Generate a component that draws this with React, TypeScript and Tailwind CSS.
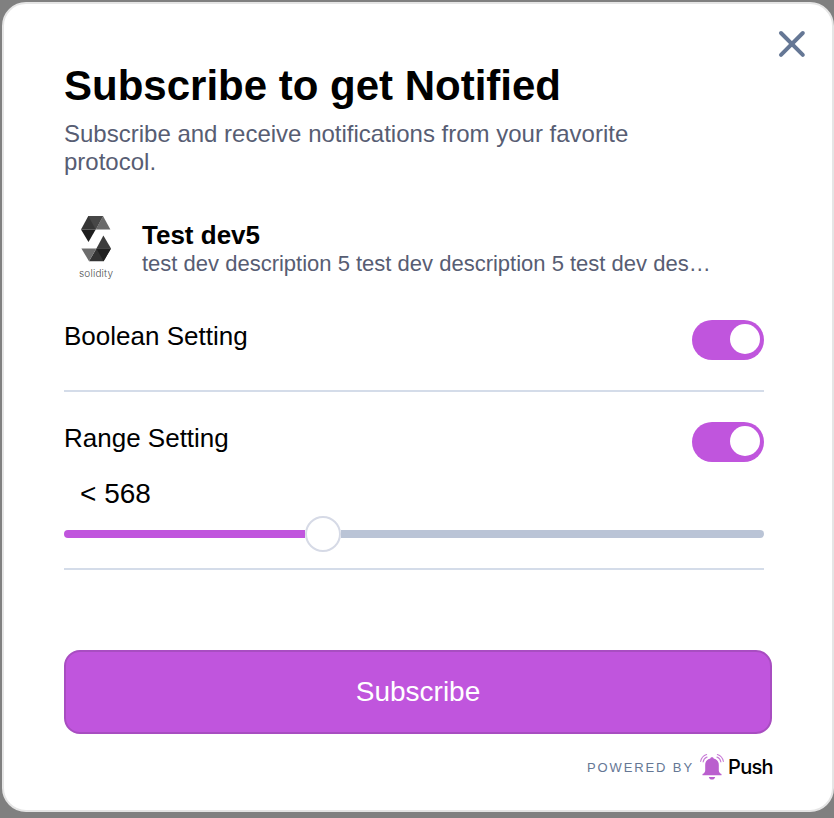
import React, { useState } from "react";

function Toggle({ label }: { label: string }) {
  const [on, setOn] = useState(true);
  return (
    <button
      role="switch"
      aria-checked={on}
      aria-label={label}
      onClick={() => setOn(!on)}
      className={`flex h-10 w-[72px] items-start rounded-full px-1 pt-1 ${on ? "justify-end bg-[#c055dd]" : "justify-start bg-[#bac4d6]"}`}
    >
      <span className="h-[30px] w-[30px] rounded-full bg-white" />
    </button>
  );
}

function SolidityLogo() {
  return (
    <svg width="64" height="64" viewBox="0 0 64 64" className="shrink-0">
      <path d="M24.3 0 17 13.5h14.7L39 0z" fill="#363636" />
      <path d="M24.3 0H39l-7.3 13.5z" fill="#474747" />
      <path d="M39 0l7.4 13.5H31.7z" fill="#6b6b6b" />
      <path d="M17 13.5h14.7L24.5 26z" fill="#1e1e1e" />
      <path d="M39.6 45.3 47 32.4H32.4L25 45.3z" fill="#343434" />
      <path d="M39.4 19.6 32.4 32.4H47z" fill="#3c3c3c" />
      <path d="M32.4 32.4H47l-7.4 12.9z" fill="#202020" />
      <path d="M17.4 32.4h15L25 45.3z" fill="#6d6d6d" />
      <text x="15" y="61" textLength="34" fill="#505050" className="font-[Inter,sans-serif] text-[10px] font-light">solidity</text>
    </svg>
  );
}

function PushBell() {
  return (
    <svg width="24" height="26" viewBox="0 0 24 26" fill="none" className="shrink-0">
      <path d="M12 3.3c.9 0 1.5.5 1.7 1.2 3.300.800 5.100 3.200 5.100 6.400v5.500c0 1.500 1 2.700 2.700 3.700v1.200h-19v-1.200c1.700-1 2.700-2.200 2.700-3.700v-5.500c0-3.200 1.800-5.600 5.100-6.400.2-.7.8-1.200 1.700-1.200zM8.800 23h6.400c-.4 1.700-1.600 2.600-3.200 2.600S9.200 24.700 8.800 23z" fill="#ba5fce" />
      <path d="M.6 7.500C1.300 4 3.500 1.600 6.600.6M3.100 8C3.500 5.600 5 3.900 7.100 3.100M23.400 7.500C22.700 4 20.500 1.600 17.400.6M20.900 8c-.4-2.400-1.900-4.100-4-4.900" stroke="#c77ad6" strokeWidth="1.100" strokeLinecap="round" />
    </svg>
  );
}

export default function App() {
  return (
    <div className="h-[818px] w-[834px] bg-[#808080] pt-0.5 pl-0.5 font-['Liberation_Sans',Arial,sans-serif] text-black">
      <main className="relative flex h-[810px] w-[832px] flex-col rounded-3xl border-2 border-[#e5e5e5] bg-white pt-[58px] pr-[58px] pl-[60px]">
        <button aria-label="Close" className="absolute top-[26px] right-[26px]">
          <svg width="28" height="28" viewBox="0 0 28 28" fill="none" stroke="#657795" strokeWidth="4" strokeLinecap="round">
            <path d="M3 3 24.800 24.800M24.800 3 3 24.800" />
          </svg>
        </button>
        <h1 className="text-[42px] leading-[48px] font-bold whitespace-nowrap">Subscribe to get Notified</h1>
        <p className="mt-2.5 w-[620px] text-2xl leading-7 text-[#575d73]">
          Subscribe and receive notifications from your favorite protocol.
        </p>
        <section className="mt-10 flex h-16">
          <SolidityLogo />
          <div className="ml-3.5 pt-1">
            <h2 className="text-[26px] leading-[30px] font-bold">Test dev5</h2>
            <p className="mt-px w-[572px] text-[22px] leading-[26px] whitespace-nowrap text-[#575d73]">
              test dev description 5 test dev description 5 test dev des…
            </p>
          </div>
        </section>
        <section className="mt-10 flex h-[72px] w-[700px] justify-between border-b-2 border-[#d4dce9]">
          <span className="pt-px text-[26px] leading-[30px]">Boolean Setting</span>
          <Toggle label="Boolean Setting" />
        </section>
        <section className="mt-[30px] h-[148px] w-[700px] border-b-2 border-[#d4dce9]">
          <div className="flex justify-between">
            <span className="pt-px text-[26px] leading-[30px]">Range Setting</span>
            <Toggle label="Range Setting" />
          </div>
          <div className="mt-4 pl-4 text-[28px] leading-8">&lt; 568</div>
          <div className="mt-1.5 flex h-9 items-center">
            <div className="h-2 w-[241px] rounded-l-full bg-[#c055dd]" />
            <div className="h-9 w-9 rounded-full border-2 border-[#d6dae6] bg-white" />
            <div className="h-2 flex-1 rounded-r-full bg-[#bac4d6]" />
          </div>
        </section>
        <button className="mt-20 h-[84px] w-[708px] shrink-0 rounded-2xl border-2 border-[#a84dc1] bg-[#c055dd] text-[28px] leading-8 text-white">
          Subscribe
        </button>
        <footer className="mt-5 flex h-[26px] w-[709px] items-center justify-end">
          <span className="pt-px text-[13px] leading-4 font-medium tracking-[1.9px] text-[#657795]">POWERED BY</span>
          <span className="ml-1.5"><PushBell /></span>
          <span className="ml-1 w-[45px] font-[Inter,sans-serif] text-[20px] leading-6 font-medium tracking-[-0.7px]">Push</span>
        </footer>
      </main>
    </div>
  );
}
